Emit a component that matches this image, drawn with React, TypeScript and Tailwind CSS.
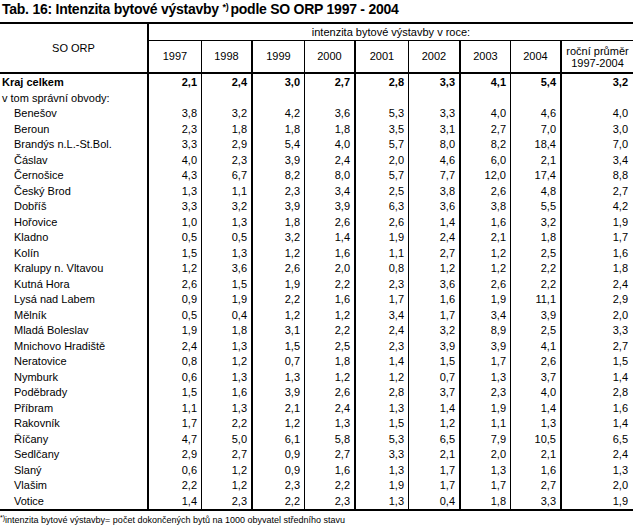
import React from 'react';

type Row = { name: string; values: string[] };

const years = ['1997', '1998', '1999', '2000', '2001', '2002', '2003', '2004'];

const rows: Row[] = [
  { name: 'Benešov', values: ['3,8', '3,2', '4,2', '3,6', '5,3', '3,3', '4,0', '4,6', '4,0'] },
  { name: 'Beroun', values: ['2,3', '1,8', '1,8', '1,8', '3,5', '3,1', '2,7', '7,0', '3,0'] },
  { name: 'Brandýs n.L.-St.Bol.', values: ['3,3', '2,9', '5,4', '4,0', '5,7', '8,0', '8,2', '18,4', '7,0'] },
  { name: 'Čáslav', values: ['4,0', '2,3', '3,9', '2,4', '2,0', '4,6', '6,0', '2,1', '3,4'] },
  { name: 'Černošice', values: ['4,3', '6,7', '8,2', '8,0', '5,7', '7,7', '12,0', '17,4', '8,8'] },
  { name: 'Český Brod', values: ['1,3', '1,1', '2,3', '3,4', '2,5', '3,8', '2,6', '4,8', '2,7'] },
  { name: 'Dobříš', values: ['3,3', '3,2', '3,9', '3,9', '6,3', '3,6', '3,8', '5,5', '4,2'] },
  { name: 'Hořovice', values: ['1,0', '1,3', '1,8', '2,6', '2,6', '1,4', '1,6', '3,2', '1,9'] },
  { name: 'Kladno', values: ['0,5', '0,5', '3,2', '1,4', '1,9', '2,4', '2,1', '1,8', '1,7'] },
  { name: 'Kolín', values: ['1,5', '1,3', '1,2', '1,6', '1,1', '2,7', '1,2', '2,5', '1,6'] },
  { name: 'Kralupy n. Vltavou', values: ['1,2', '3,6', '2,6', '2,0', '0,8', '1,2', '1,2', '2,2', '1,8'] },
  { name: 'Kutná Hora', values: ['2,6', '1,5', '1,9', '2,2', '2,3', '3,6', '2,6', '2,2', '2,4'] },
  { name: 'Lysá nad Labem', values: ['0,9', '1,9', '2,2', '1,6', '1,7', '1,6', '1,9', '11,1', '2,9'] },
  { name: 'Mělník', values: ['0,5', '0,4', '1,2', '1,2', '3,4', '1,7', '3,4', '3,9', '2,0'] },
  { name: 'Mladá Boleslav', values: ['1,9', '1,8', '3,1', '2,2', '2,4', '3,2', '8,9', '2,5', '3,3'] },
  { name: 'Mnichovo Hradiště', values: ['2,4', '1,3', '1,5', '2,5', '2,3', '3,9', '3,9', '4,1', '2,7'] },
  { name: 'Neratovice', values: ['0,8', '1,2', '0,7', '1,8', '1,4', '1,5', '1,7', '2,6', '1,5'] },
  { name: 'Nymburk', values: ['0,6', '1,3', '1,3', '1,2', '1,2', '0,7', '1,3', '3,7', '1,4'] },
  { name: 'Poděbrady', values: ['1,5', '1,6', '3,9', '2,6', '2,8', '3,7', '2,3', '4,0', '2,8'] },
  { name: 'Příbram', values: ['1,1', '1,3', '2,1', '2,4', '1,3', '1,4', '1,9', '1,4', '1,6'] },
  { name: 'Rakovník', values: ['1,7', '2,2', '1,2', '1,3', '1,5', '1,2', '1,1', '1,3', '1,4'] },
  { name: 'Říčany', values: ['4,7', '5,0', '6,1', '5,8', '5,3', '6,5', '7,9', '10,5', '6,5'] },
  { name: 'Sedlčany', values: ['2,9', '2,7', '0,9', '2,7', '3,3', '2,1', '2,0', '2,1', '2,4'] },
  { name: 'Slaný', values: ['0,6', '1,2', '0,9', '1,6', '1,3', '1,7', '1,3', '1,6', '1,3'] },
  { name: 'Vlašim', values: ['2,2', '1,2', '2,3', '2,2', '1,9', '1,7', '1,7', '2,7', '2,0'] },
  { name: 'Votice', values: ['1,4', '2,3', '2,2', '2,3', '1,3', '0,4', '1,8', '3,3', '1,9'] },
];

const total = ['2,1', '2,4', '3,0', '2,7', '2,8', '3,3', '4,1', '5,4', '3,2'];

// thick line after every pair of year columns
const sep = [
  'border-l-2',
  'border-l',
  'border-l-2',
  'border-l',
  'border-l-2',
  'border-l',
  'border-l-2',
  'border-l',
  'border-l-2',
];

const grid = 'grid grid-cols-[147px_54px_50px_53px_50px_54px_51px_51px_50px_73px]';

const ValueCells = ({ values, bold, h }: { values: string[]; bold?: boolean; h: string }) => (
  <>
    {values.map((v, i) => (
      <div
        key={i}
        className={`${sep[i]} border-black ${h} flex items-center justify-end ${i === 8 ? 'pr-[5px]' : 'pr-1'} ${bold ? 'font-bold' : ''}`}
      >
        {v}
      </div>
    ))}
  </>
);

export default function App() {
  return (
    <div className="w-[633px] h-[528px] bg-white text-black font-['Liberation_Sans',Arial,sans-serif] text-[11px] leading-[13px] overflow-hidden">
      <div className="h-[22px] pl-[2px] pt-[1px] text-[14px] leading-[17px] font-bold tracking-[-0.25px] whitespace-nowrap">
        Tab. 16: Intenzita bytové výstavby <sup className="text-[9px] pr-[2px]">*)</sup>podle SO ORP 1997 - 2004
      </div>

      <div className="border-t-2 border-b-2 border-black">
        <div className={`${grid} grid-rows-[17px_31px]`}>
          <div className="row-span-2 flex items-center justify-center">SO ORP</div>
          <div className="col-span-9 border-l-2 border-b border-black flex items-center justify-center">
            intenzita bytové výstavby v roce:
          </div>
          {years.map((y, i) => (
            <div key={y} className={`${sep[i]} border-black flex items-center justify-center`}>
              {y}
            </div>
          ))}
          <div className="border-l-2 border-black flex flex-col items-center justify-center leading-[12px]">
            <span>roční průměr</span>
            <span>1997-2004</span>
          </div>
        </div>
      </div>

      <div className={`${grid} border-b-2 border-black`}>
        <div className="h-4 flex items-center pl-[2px] font-bold">Kraj celkem</div>
        <ValueCells values={total} bold h="h-4" />

        <div className="h-4 flex items-center pl-[2px]">v tom správní obvody:</div>
        <ValueCells values={['', '', '', '', '', '', '', '', '']} h="h-4" />

        {rows.map((r) => (
          <React.Fragment key={r.name}>
            <div className="h-[15.5px] flex items-center pl-[14px] whitespace-nowrap">{r.name}</div>
            <ValueCells values={r.values} h="h-[15.5px]" />
          </React.Fragment>
        ))}
      </div>

      <div className="pt-[3px] text-[9px] leading-[12px] whitespace-nowrap">
        <sup className="text-[7px]">*)</sup>intenzita bytové výstavby= počet dokončených bytů na 1000 obyvatel středního stavu
      </div>
    </div>
  );
}
